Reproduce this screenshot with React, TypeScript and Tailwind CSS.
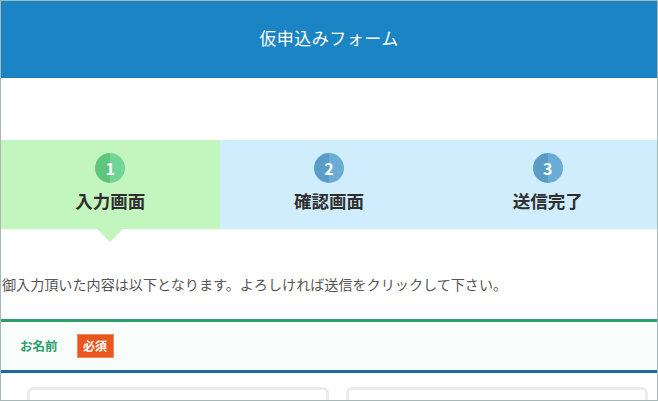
import type { ReactNode } from 'react';

type Step = { no: number; label: string; active?: boolean };

const steps: Step[] = [
  { no: 1, label: '入力画面', active: true },
  { no: 2, label: '確認画面' },
  { no: 3, label: '送信完了' },
];

const StepItem = ({ step }: { step: Step }) => (
  <div
    className={[
      'relative flex flex-col items-center pt-[13px]',
      step.active ? 'bg-[#c3f5bf]' : 'bg-[#cfedfd]',
    ].join(' ')}
  >
    <div
      className={[
        'w-[30px] h-[30px] rounded-full flex items-center justify-center text-white font-bold text-[16px] leading-none',
        step.active
          ? 'bg-[linear-gradient(90deg,#5fc47e_50%,#71d598_50%)]'
          : 'bg-[linear-gradient(90deg,#5b9cc6_50%,#69acd6_50%)]',
      ].join(' ')}
    >
      {step.no}
    </div>
    <div className="mt-[6px] text-[17.5px] font-bold text-[#2f2f2f] leading-[23px]">{step.label}</div>
    {step.active && (
      <div className="absolute left-1/2 -translate-x-1/2 top-full w-0 h-0 border-l-[13px] border-r-[13px] border-t-[13px] border-l-transparent border-r-transparent border-t-[#c3f5bf]" />
    )}
  </div>
);

const Badge = ({ children }: { children: ReactNode }) => (
  <span className="inline-flex items-center justify-center w-[37px] h-[24px] bg-[#ea561f] border border-[#f08a5f] text-white text-[12px] font-bold">
    {children}
  </span>
);

export default function App() {
  return (
    <div
      className="w-[658px] h-[401px] overflow-hidden border border-[#a6bab5] bg-white"
      style={{ fontFamily: '"Noto Sans CJK JP", "Noto Sans", sans-serif' }}
    >
      <header className="h-[77px] bg-[#1b84c4] border-b border-[#1677b3] flex items-center justify-center pb-[3px]">
        <h1 className="text-white text-[17px] font-normal tracking-[0.5px]">仮申込みフォーム</h1>
      </header>

      <div className="h-[62px]" />

      <div className="grid grid-cols-3 h-[89px]">
        {steps.map((s) => (
          <StepItem key={s.no} step={s} />
        ))}
      </div>

      <p className="mt-[45px] pl-[1px] text-[14.1px] leading-[20px] text-[#555555] whitespace-nowrap">
        御入力頂いた内容は以下となります。よろしければ送信をクリックして下さい。
      </p>

      <div className="mt-[25px] border-t-[3px] border-[#2f9e6e] border-b-[3px] border-b-[#1a6aa8] bg-[#f8fdfc] h-[54px] flex items-center gap-[19px] pl-[19px]">
        <span className="text-[12.5px] font-bold text-[#2f9e6e]">お名前</span>
        <Badge>必須</Badge>
      </div>

      <div className="grid grid-cols-2 gap-[17px] pl-[26px] pr-[9px] pt-[14px]">
        <div className="h-[40px] rounded-[6px] border-[3px] border-[#ececec] bg-white" />
        <div className="h-[40px] rounded-[6px] border-[3px] border-[#ececec] bg-white" />
      </div>
    </div>
  );
}
